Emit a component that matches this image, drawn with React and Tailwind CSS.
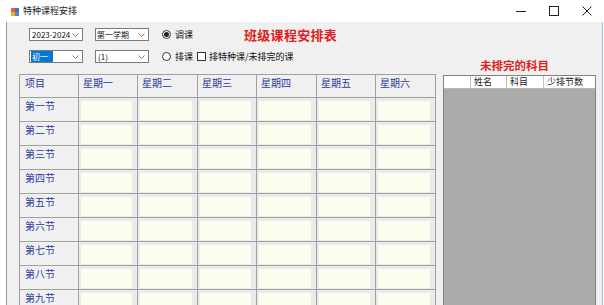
import React from "react";

const font = { fontFamily: '"Noto Sans CJK SC", "Noto Sans", sans-serif' };

function Chevron() {
  return (
    <svg width="7" height="4" viewBox="0 0 7 4" className="shrink-0">
      <polyline points="0.5,0.5 3.5,3.5 6.5,0.5" fill="none" stroke="#707070" strokeWidth="0.9" />
    </svg>
  );
}

function Combo({ children }) {
  return (
    <div className="flex h-[13px] w-[54px] items-center border border-[#7a7a7a] bg-white pr-[3px]">
      <div className="flex-1 overflow-hidden whitespace-nowrap text-[8px] leading-[11px] text-[#111]">{children}</div>
      <Chevron />
    </div>
  );
}

function Radio({ checked }) {
  return (
    <div className="flex h-[9px] w-[9px] items-center justify-center rounded-full border border-[#333] bg-white">
      {checked && <div className="h-[5px] w-[5px] rounded-full bg-[#222]" />}
    </div>
  );
}

const days = ["星期一", "星期二", "星期三", "星期四", "星期五", "星期六"];
const periods = ["第一节", "第二节", "第三节", "第四节", "第五节", "第六节", "第七节", "第八节", "第九节"];

export default function App() {
  return (
    <div className="h-[305px] w-[604px] overflow-hidden bg-white" style={font}>
      {/* title bar */}
      <div className="flex h-[22px] items-center bg-white">
        <svg width="8" height="8" viewBox="0 0 8 8" className="ml-[11px] mt-[1px]">
          <rect x="0" y="0" width="4" height="4" fill="#e8642c" />
          <rect x="4" y="0" width="4" height="4" fill="#3b6fd0" />
          <rect x="0" y="4" width="4" height="4" fill="#f0b020" />
          <rect x="4" y="4" width="4" height="4" fill="#4a8ad8" />
        </svg>
        <span className="ml-[4px] text-[9px] leading-[12px] text-[#222]">特种课程安排</span>
        <div className="ml-auto flex items-center">
          <svg width="10" height="10" viewBox="0 0 10 10" className="mr-[23px]">
            <line x1="0" y1="5.5" x2="10" y2="5.5" stroke="#222" strokeWidth="1" />
          </svg>
          <svg width="10" height="10" viewBox="0 0 10 10" className="mr-[23px]">
            <rect x="0.5" y="0.5" width="9" height="9" fill="none" stroke="#222" strokeWidth="1" />
          </svg>
          <svg width="10" height="10" viewBox="0 0 10 10" className="mr-[12px]">
            <line x1="0.5" y1="0.5" x2="9.5" y2="9.5" stroke="#222" strokeWidth="1" />
            <line x1="9.5" y1="0.5" x2="0.5" y2="9.5" stroke="#222" strokeWidth="1" />
          </svg>
        </div>
      </div>

      {/* body */}
      <div className="flex h-[283px] items-start">
        <div className="h-full w-[6px] shrink-0 bg-white" />
        <div className="h-full w-px shrink-0 bg-[#9a9a9a]" />
        <div className="flex h-[330px] w-[595px] shrink-0 flex-col bg-[#f0f0f0]">
          {/* top controls */}
          <div className="flex h-[52px] shrink-0">
            <div className="flex flex-col gap-[9px] pl-[22px] pt-[6px]">
              <div className="flex h-[13px] items-center">
                <Combo><span className="pl-[2px]">2023-2024</span></Combo>
                <div className="ml-[12px]"><Combo><span className="pl-[1px]">第一学期</span></Combo></div>
                <div className="ml-[13px] flex w-[82px] items-center">
                  <Radio checked />
                  <span className="ml-[4px] text-[9px] leading-[12px] text-[#111]">调课</span>
                </div>
                <span className="text-[13px] font-bold leading-[16px] tracking-[0.3px] text-[#e02020]">班级课程安排表</span>
              </div>
              <div className="flex h-[13px] items-center">
                <Combo>
                  <span className="ml-px inline-block bg-[#0078d7] pl-px pr-[5px] text-white">初一</span>
                </Combo>
                <div className="ml-[12px]"><Combo><span className="pl-[2px]">(1)</span></Combo></div>
                <div className="ml-[13px] flex items-center">
                  <Radio />
                  <span className="ml-[4px] text-[9px] leading-[12px] text-[#111]">排课</span>
                  <div className="ml-[4px] h-[9px] w-[9px] border border-[#333] bg-white" />
                  <span className="ml-[3px] text-[9px] leading-[12px] text-[#111]">排特种课/未排完的课</span>
                </div>
              </div>
            </div>
            <div className="mb-[2px] ml-auto mr-[53px] self-end text-[11.5px] font-bold leading-[14px] text-[#e02020]">
              未排完的科目
            </div>
          </div>

          {/* grid + panel */}
          <div className="flex shrink-0 items-start pl-[12px]">
            <div className="grid w-[417px] shrink-0 grid-cols-[59px_59px_60px_59px_60px_59px_60px] border-l border-t border-[#a0a0a0]">
              <div className="h-[23px] border-b border-r border-[#a0a0a0] pl-[5px] pt-[2px] text-[10px] leading-[12px] text-[#2a3a9a]">项目</div>
              {days.map((d) => (
                <div key={d} className="h-[23px] border-b border-r border-[#a0a0a0] pl-[4px] pt-[2px] text-[10px] leading-[12px] text-[#2a3a9a]">
                  {d}
                </div>
              ))}
              {periods.map((p) => (
                <React.Fragment key={p}>
                  <div className="h-[24px] border-b border-r border-[#a0a0a0] pl-[5px] pt-[2px] text-[10px] leading-[12px] text-[#2a3a9a]">{p}</div>
                  {days.map((d) => (
                    <div key={d} className="h-[24px] border-b border-r border-[#a0a0a0] bg-[#ebebeb] pl-[2px] pr-[5px] pt-[3px]">
                      <div className="h-[19px] bg-[#fdfdf0]" />
                    </div>
                  ))}
                </React.Fragment>
              ))}
            </div>
            <div className="ml-[7px] mt-px h-[240px] w-[153px] shrink-0 border border-[#828282] bg-[#ababab]">
              <div className="flex h-[13px] border-b border-[#b8b8b8] bg-white text-[9px] leading-[12px] text-[#222]">
                <div className="w-[27px] border-r border-[#c0c0c0]" />
                <div className="w-[36px] border-r border-[#c0c0c0] pl-[3px]">姓名</div>
                <div className="w-[37px] border-r border-[#c0c0c0] pl-[3px]">科目</div>
                <div className="flex-1 pl-[3px]">少排节数</div>
              </div>
            </div>
          </div>
        </div>
        <div className="h-full w-px shrink-0 bg-[#9cc9cc]" />
        <div className="h-full w-px shrink-0 bg-white" />
      </div>
    </div>
  );
}
